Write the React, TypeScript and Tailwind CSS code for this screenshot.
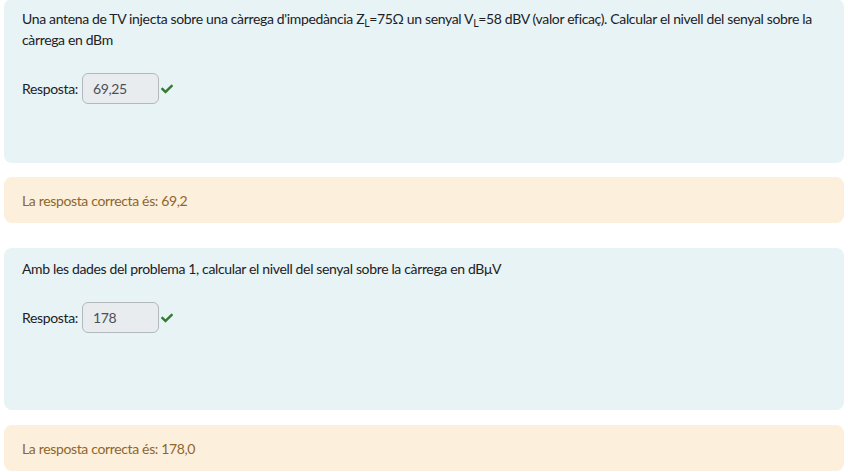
import React from "react";
import { FaCheck } from "react-icons/fa";

const font = { fontFamily: "Lato, 'Noto Sans', sans-serif" };

function Answer({ value }: { value: string }) {
  return (
    <div className="flex items-center mt-[23px]">
      <span className="text-[#1d2125]">Resposta:</span>
      <div className="ml-[4px] w-[77px] h-[31px] rounded-[6px] border border-[#b3b8bd] bg-[#e9ecef] flex items-center pl-[10px] text-[#495057]">
        {value}
      </div>
      <FaCheck className="ml-[2px] text-[#357a32]" size={12} />
    </div>
  );
}

export default function App() {
  return (
    <div className="w-[848px] h-[472px] overflow-hidden bg-white px-[4px] text-[14px] leading-[21px] tracking-[-0.35px]" style={font}>
      <div className="-mt-[1px] min-h-[164px] rounded-[8px] bg-[#e7f3f5] pl-[18px] pr-[16px] pt-[9px] text-[#1d2125]">
        <p>
          Una antena de TV injecta sobre una càrrega d'impedància Z<sub>L</sub>=75Ω un senyal V<sub>L</sub>=58 dBV (valor eficaç). Calcular el nivell del senyal sobre la càrrega en dBm
        </p>
        <Answer value="69,25" />
      </div>
      <div className="mt-[14px] h-[46px] rounded-[8px] bg-[#fcefdc] pl-[18px] flex items-center text-[#8e662e]">
        La resposta correcta és: 69,2
      </div>
      <div className="mt-[25px] min-h-[162px] rounded-[8px] bg-[#e7f3f5] pl-[18px] pr-[16px] pt-[10px] text-[#1d2125]">
        <p>Amb les dades del problema 1, calcular el nivell del senyal sobre la càrrega en dBμV</p>
        <Answer value="178" />
      </div>
      <div className="mt-[15px] h-[46px] rounded-[8px] bg-[#fcefdc] pl-[18px] flex items-center text-[#8e662e]">
        La resposta correcta és: 178,0
      </div>
    </div>
  );
}
